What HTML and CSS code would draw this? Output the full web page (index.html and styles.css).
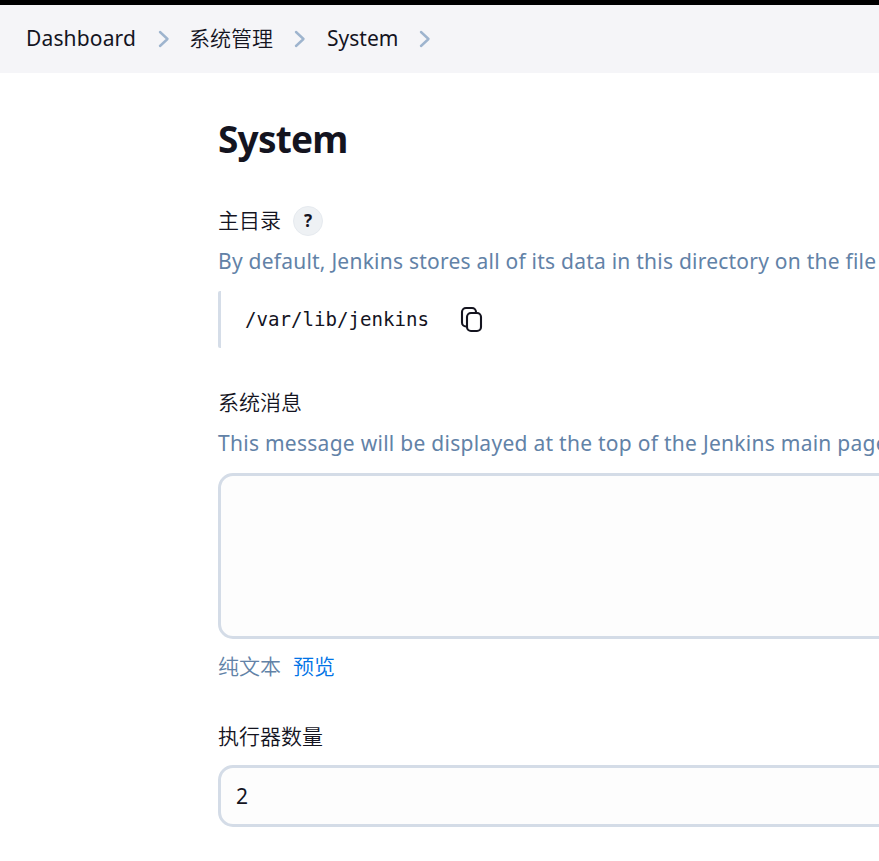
FILE: index.html
```html
<!DOCTYPE html>
<html lang="zh-CN">
<head>
<meta charset="utf-8">
<title>System</title>
<link rel="stylesheet" href="styles.css">
</head>
<body>
<nav class="breadcrumbs">
  <a class="crumb crumb-dashboard">Dashboard</a>
  <svg class="chevron" viewBox="0 0 12 18"><path d="M2 2l7.500 7L2 16"/></svg>
  <a class="crumb zh"><span>系统管理</span></a>
  <svg class="chevron" viewBox="0 0 12 18"><path d="M2 2l7.500 7L2 16"/></svg>
  <a class="crumb crumb-system">System</a>
  <svg class="chevron" viewBox="0 0 12 18"><path d="M2 2l7.500 7L2 16"/></svg>
</nav>
<main class="content">
  <h1>System</h1>
  <section class="home">
    <div class="label"><span class="zh">主目录</span><a class="help">?</a></div>
    <p class="description">By default, Jenkins stores all of its data in this directory on the file</p>
    <div class="quote">
      <code>/var/lib/jenkins</code>
      <svg class="copy" viewBox="0 0 24 28"><rect x="7" y="7" width="14" height="18" rx="4"/><path d="M6.700 20.500H6a4 4 0 0 1-4-4V6a4 4 0 0 1 4-4h6a4 4 0 0 1 4 4v1"/></svg>
    </div>
  </section>
  <section class="message">
    <div class="label"><span class="zh">系统消息</span></div>
    <p class="description">This message will be displayed at the top of the Jenkins main page</p>
    <div class="textarea"></div>
    <div class="preview zh"><span>纯文本</span><a>预览</a></div>
  </section>
  <section class="executors">
    <div class="label"><span class="zh">执行器数量</span></div>
    <div class="input">2</div>
  </section>
</main>
</body>
</html>
```

FILE: styles.css
```css
* { box-sizing: border-box; }
body {
  margin: 0;
  height: 861px;
  overflow: hidden;
  background: #fff;
  color: #14141f;
  font: 21px/30px "Noto Sans", "Noto Sans CJK SC", sans-serif;
}
h1, p { margin: 0; }
.zh { font-family: "Noto Sans CJK SC", sans-serif; font-weight: 350; }
.breadcrumbs {
  display: flex;
  align-items: center;
  height: 73px;
  padding-left: 26px;
  border-top: 5px solid #000;
  background: #f5f5f8;
}
.crumb { height: 32px; white-space: nowrap; }
.crumb.zh { height: 34px; }
.crumb-dashboard { width: 110px; letter-spacing: 0.15px; }
.crumb-system { width: 71px; margin-left: 1px; }
.chevron {
  width: 12px;
  height: 18px;
  margin: 0 19px 0 22px;
  fill: none;
  stroke: #9eb4ce;
  stroke-width: 2.4;
  stroke-linecap: round;
  stroke-linejoin: round;
}
.crumb.zh + .chevron, .crumb-system + .chevron { margin-left: 21px; margin-right: 20px; }
.content { overflow: hidden; padding: 44px 0 0 218px; white-space: nowrap; }
h1 { height: 46px; font-size: 37px; line-height: 44px; font-weight: 700; letter-spacing: -0.8px; }
.label { display: flex; align-items: center; height: 30px; }
.label .zh { height: 34px; }
.home { margin-top: 43px; }
.help {
  width: 30px;
  height: 30px;
  margin-left: 12px;
  border: 1px solid #e6eaef;
  border-radius: 50%;
  background: #eef1f4;
  font: 700 17px/28px "Noto Sans", sans-serif;
  text-align: center;
}
.description { margin-top: 10px; color: #6282a7; letter-spacing: 0.23px; }
.quote {
  display: flex;
  align-items: center;
  height: 57px;
  margin-top: 15px;
  padding-left: 24px;
  border-left: 3px solid #d5dde8;
  border-radius: 2px;
}
code { width: 184px; font: 19.1px/30px "DejaVu Sans Mono", monospace; }
.copy {
  width: 24px;
  height: 28px;
  margin-left: 31px;
  fill: none;
  stroke: #14141f;
  stroke-width: 2.1;
  stroke-linecap: round;
}
.message { margin-top: 40px; }
.message .description { margin-top: 10px; letter-spacing: 0.27px; }
.textarea, .input {
  margin-right: -20px;
  border: 3px solid #d4dce7;
  border-radius: 15px;
  background: #fdfdfd;
}
.textarea { height: 166px; margin-top: 15px; }
.preview { display: flex; gap: 12px; height: 30px; margin-top: 11px; color: #6282a7; }
.preview a { color: #0073e6; }
.executors { margin-top: 42px; }
.input { height: 62px; margin-top: 13px; padding-left: 15px; line-height: 56px; }
```
